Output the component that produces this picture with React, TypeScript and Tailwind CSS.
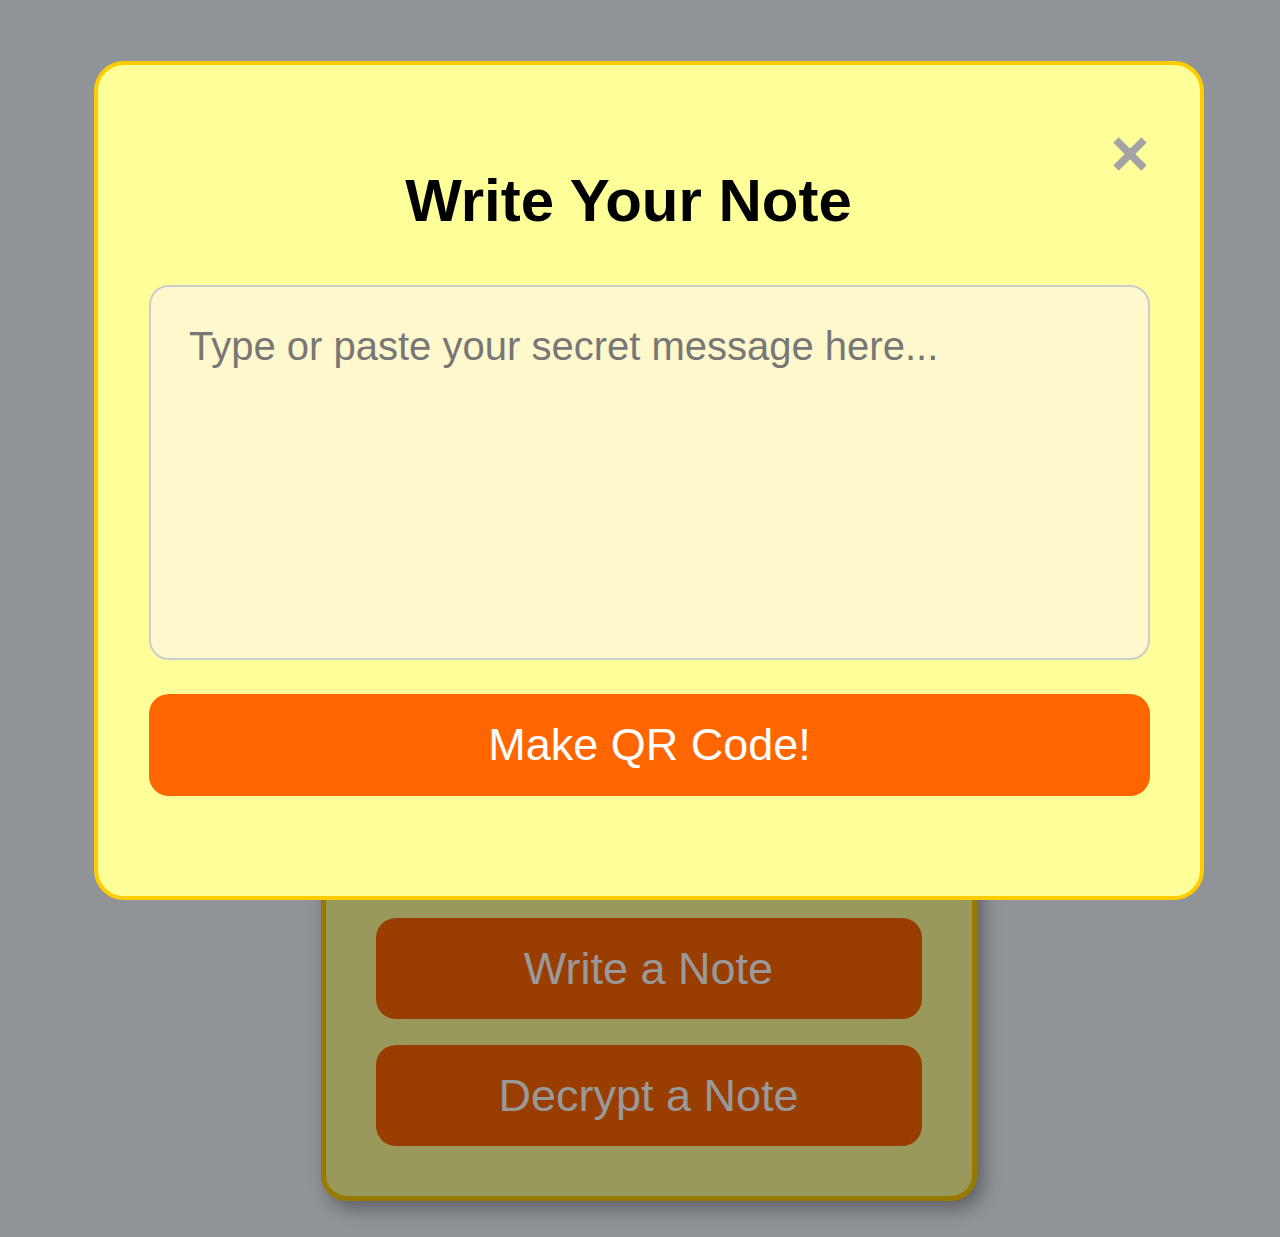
import { useState } from "react";

function CloseIcon() {
  return (
    <svg width="36" height="36" viewBox="0 0 36 36" fill="none">
      <path d="M4 4L32 32M32 4L4 32" stroke="#a3a3a3" strokeWidth={7.5} strokeLinecap="butt" />
    </svg>
  );
}

export default function App() {
  const [note, setNote] = useState("");

  return (
    <div className="relative min-h-screen bg-[#f0f7ff] font-['Liberation_Sans',Arial,sans-serif]">
      {/* Main card behind the dialog */}
      <main className="flex min-h-screen items-end justify-center pb-[36px] pl-[17px]">
        <div className="w-[656px] rounded-[26px] border-[5px] border-[#ffcc00] bg-[#ffff99] pb-[50px] pl-[50px] pr-[50px] pt-[50px] shadow-[6px_8px_18px_rgba(0,0,0,0.35)]">
          <h1 className="mb-[60px] text-center text-[48px] font-bold text-black">QR Notes</h1>
          <div className="flex flex-col gap-[26px]">
            <button className="h-[101px] rounded-[20px] bg-[#ff6600] text-[45px] text-white">
              Write a Note
            </button>
            <button className="h-[101px] rounded-[20px] bg-[#ff6600] text-[45px] text-white">
              Decrypt a Note
            </button>
          </div>
        </div>
      </main>

      {/* Dialog overlay */}
      <div className="fixed inset-0 flex items-start justify-center bg-black/40 pl-[18px] pt-[61px]">
        <div className="relative w-[1110px] rounded-[30px] border-4 border-[#ffcc00] bg-[#ffff99] pb-[100px] pl-[51px] pr-[50px] pt-[106px]">
          <button className="absolute right-[52px] top-[71px]" aria-label="Close">
            <CloseIcon />
          </button>
          <h2 className="mb-[54px] pr-[42px] text-center text-[60px] font-bold leading-none text-black">
            Write Your Note
          </h2>
          <textarea
            value={note}
            onChange={(e) => setNote(e.target.value)}
            placeholder="Type or paste your secret message here..."
            className="block h-[375px] w-full resize-none rounded-[20px] border-2 border-[#cccccc] bg-[#fff8cc] px-[38px] pt-[29px] text-[40px] leading-[1.5] text-black outline-none placeholder:text-[#777777]"
          />
          <button className="mt-[34px] h-[102px] w-full rounded-[20px] bg-[#ff6600] text-[45px] text-white">
            Make QR Code!
          </button>
        </div>
      </div>
    </div>
  );
}
